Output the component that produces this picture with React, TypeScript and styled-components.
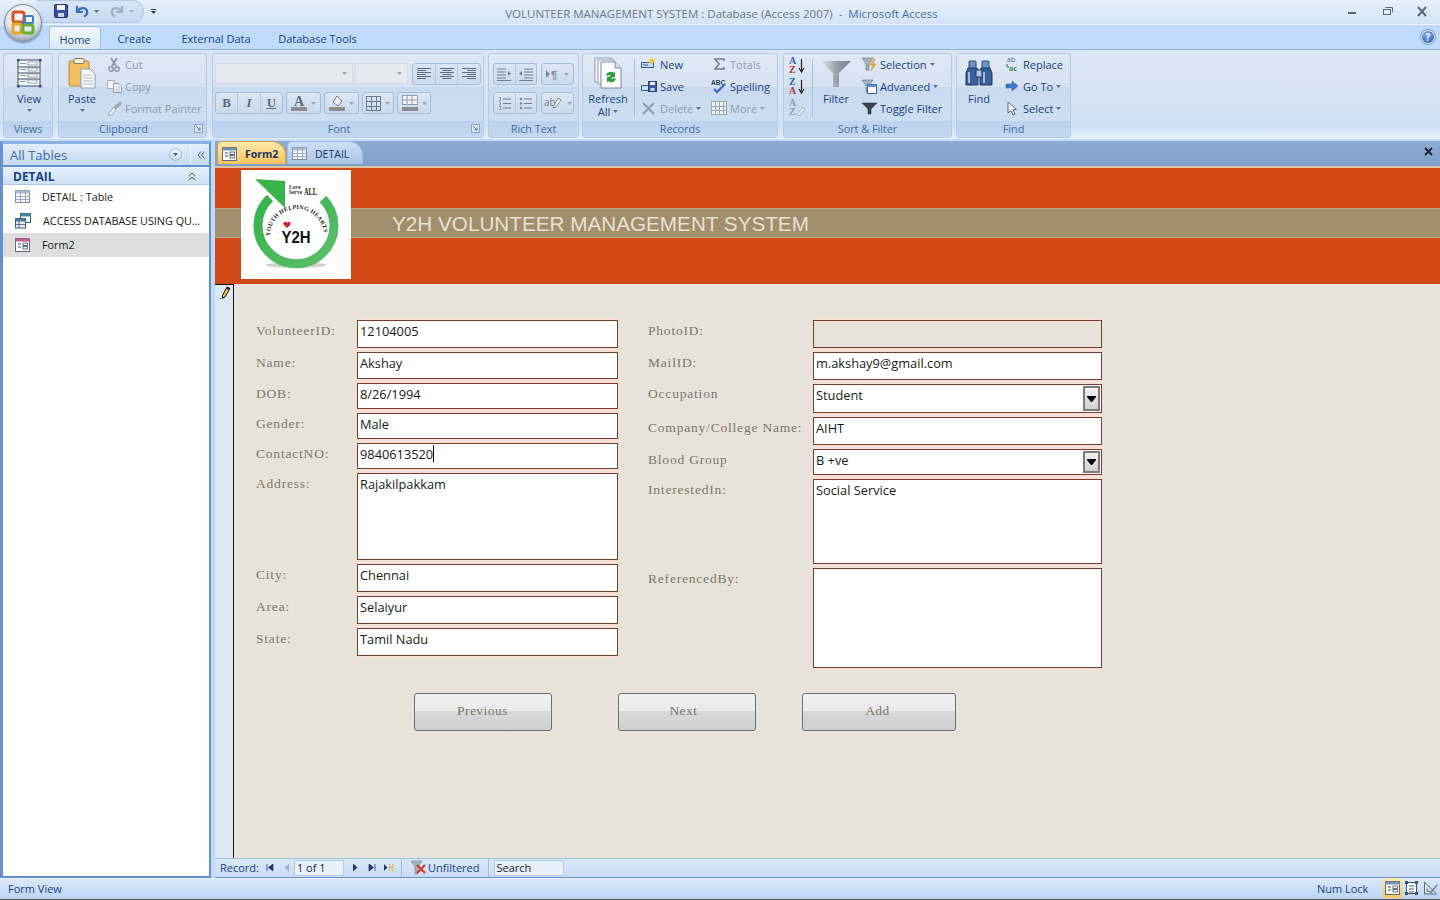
import { ReactNode } from "react";
import styled, { createGlobalStyle } from "styled-components";

const GlobalStyle = createGlobalStyle`
  html, body { margin: 0; padding: 0; height: 100%; overflow: hidden; }
  body { font-family: "Open Sans", "Noto Sans", sans-serif; font-size: 11px; color: #15428b; }
  * { box-sizing: border-box; }
`;

/* ---------- small drawings ---------- */

const Svg = ({ w, h = w, children }: { w: number; h?: number; children: ReactNode }) => (
  <svg width={w} height={h} viewBox={`0 0 ${w} ${h}`} style={{ display: "block", flex: "none", overflow: "visible" }}>
    {children}
  </svg>
);

const Caret = ({ color = "#5a6f8f" }: { color?: string }) => (
  <Svg w={5} h={3}>
    <path d="M0 0h5L2.5 3z" fill={color} />
  </Svg>
);

const ComboArrow = () => (
  <Svg w={9} h={6}>
    <path d="M0 0h9v1L5 6H4L0 1z" fill="#000" />
  </Svg>
);

const OfficeLogo = () => (
  <Svg w={26}>
    <rect x="3" y="2" width="11" height="10" rx="2" fill="none" stroke="#d8541f" strokeWidth="3" />
    <rect x="15" y="6" width="8" height="7" rx="1" fill="none" stroke="#3d7fc4" strokeWidth="2" />
    <rect x="3" y="14" width="8" height="9" rx="1" fill="none" stroke="#e5a823" strokeWidth="3" />
    <rect x="13" y="15" width="10" height="8" rx="2" fill="none" stroke="#6bae3a" strokeWidth="3" />
    <circle cx="13" cy="13" r="1.6" fill="#3d7fc4" />
  </Svg>
);

const SaveIcon = () => (
  <Svg w={14}>
    <rect x="0.5" y="0.5" width="13" height="13" rx="1" fill="#3b4f9c" stroke="#24306f" />
    <rect x="3" y="1" width="8" height="5" fill="#eef2fb" />
    <rect x="4" y="9" width="6" height="4" fill="#cfd6e8" />
  </Svg>
);

const UndoIcon = ({ color, flip }: { color: string; flip?: boolean }) => (
  <Svg w={14}>
    <path
      d="M2 2v6h6M2.5 7.5C5 3 11 3 12 7c.6 2.6-1 4.6-3 5.5"
      fill="none"
      stroke={color}
      strokeWidth="2.2"
      transform={flip ? "translate(14 0) scale(-1 1)" : undefined}
    />
  </Svg>
);

const ViewIcon = () => (
  <Svg w={26} h={30}>
    <rect x="2" y="2" width="22" height="26" fill="#f4f7fb" stroke="#3e4d63" />
    {[8, 14, 20].map((y) => (
      <path key={y} d={`M2 ${y + 1}h22`} stroke="#3e4d63" />
    ))}
    {[4, 10, 16, 22].map((y) => (
      <rect key={y} x="12" y={y} width="9" height="3" fill="#fff" stroke="#6d7c92" strokeWidth="0.7" />
    ))}
    {[4, 10, 16, 22].map((y) => (
      <path key={y} d={`M4 ${y + 1.5}h6`} stroke="#8895a8" />
    ))}
    {[[2, 2], [24, 2], [2, 28], [24, 28]].map(([x, y]) => (
      <rect key={`${x}-${y}`} x={x - 1} y={y - 1} width="2.5" height="2.5" fill="#2d4e85" />
    ))}
  </Svg>
);

const PasteIcon = () => (
  <Svg w={28} h={31}>
    <rect x="1" y="3" width="20" height="25" rx="1.5" fill="#f0c060" stroke="#b58a3c" />
    <rect x="6" y="0.5" width="10" height="5" rx="1" fill="#f4f0e4" stroke="#8a7a55" />
    <path d="M13 11h9l5 5v14H13z" fill="#fbfbfb" stroke="#8d9db3" />
    <path d="M15 17h9M15 20h10M15 23h10M15 26h10" stroke="#a9b5c6" />
  </Svg>
);

const CutIcon = () => (
  <Svg w={12} h={15}>
    <path d="M3 1l5 8M9 1L4 9" stroke="#8796aa" strokeWidth="1.6" />
    <circle cx="3" cy="12" r="2.2" fill="none" stroke="#8796aa" strokeWidth="1.4" />
    <circle cx="9" cy="12" r="2.2" fill="none" stroke="#8796aa" strokeWidth="1.4" />
  </Svg>
);

const CopyIcon = () => (
  <Svg w={15} h={13}>
    <path d="M.5.5h7v8h-7z" fill="#f1f4f8" stroke="#a3afc0" />
    <path d="M6.5 3.5h5l3 3v6h-8z" fill="#f8f9fb" stroke="#8f9cae" />
    <path d="M8 7h5M8 9h5M8 11h5" stroke="#b1bccb" />
  </Svg>
);

const BrushIcon = () => (
  <Svg w={15}>
    <path d="M13 1l1.500 1.500L9 8 7 6z" fill="#9aa8ba" stroke="#7f8ea3" strokeWidth="0.6" />
    <path d="M6.500 6L9 8.500 5 14H1l1-3 2-1z" fill="#e9edf3" stroke="#8f9cae" strokeWidth="0.8" />
  </Svg>
);

const AlignIcon = ({ mode }: { mode: "left" | "center" | "right" }) => {
  const rows = [14, 9, 14, 9, 14, 9];
  return (
    <Svg w={14} h={12}>
      {rows.map((w, i) => {
        const x = mode === "left" ? 0 : mode === "right" ? 14 - w : (14 - w) / 2;
        return <rect key={i} x={x} y={i * 2} width={w} height="1" fill="#5c6b80" />;
      })}
    </Svg>
  );
};

const SwatchIcon = ({ kind }: { kind: "font" | "fill" }) => (
  <Svg w={16}>
    {kind === "font" ? (
      <text x="8" y="11" textAnchor="middle" fontFamily="Liberation Serif, serif" fontWeight="700" fontSize="14" fill="#5c6b80">
        A
      </text>
    ) : (
      <path d="M8 1l5 5-4 5-5-4z" fill="#f3f5f8" stroke="#6d7c92" />
    )}
    <rect x="0" y="12" width="16" height="4" fill="#8d8d8d" />
  </Svg>
);

const GridIcon = ({ w = 15, h = 15, color = "#6a7a92", fill = "none", cols = 3, rows = 3 }: { w?: number; h?: number; color?: string; fill?: string; cols?: number; rows?: number }) => (
  <Svg w={w} h={h}>
    <rect x=".5" y=".5" width={w - 1} height={h - 1} fill={fill} stroke={color} />
    {Array.from({ length: cols - 1 }, (_, i) => (
      <path key={i} d={`M${Math.round(((i + 1) * w) / cols) + 0.5} 0v${h}`} stroke={color} />
    ))}
    {Array.from({ length: rows - 1 }, (_, i) => (
      <path key={i} d={`M0 ${Math.round(((i + 1) * h) / rows) + 0.5}h${w}`} stroke={color} />
    ))}
  </Svg>
);

const GridlinesIcon = () => (
  <Svg w={16}>
    <rect x=".5" y=".5" width="15" height="9" fill="#f3f5f8" stroke="#8d9bb0" />
    <path d="M0 5h16M5 0v10M10 0v10" stroke="#8d9bb0" />
    <rect x="0" y="12" width="16" height="4" fill="#8d8d8d" />
  </Svg>
);

const IndentIcon = ({ flip }: { flip?: boolean }) => (
  <Svg w={14} h={13}>
    <g transform={flip ? "translate(14 0) scale(-1 1)" : undefined}>
      <path d="M5 1h9M5 4h9M5 7h9M5 10h9M0 12.500h14" stroke="#6f7e94" />
      <path d="M3 3v5L0 5.500z" fill="#6f7e94" />
    </g>
  </Svg>
);

const ParaIcon = () => (
  <Svg w={14} h={11}>
    <path d="M0 1v8l4-4z" fill="#7a889c" />
    <text x="5" y="10" fontFamily="Liberation Sans, sans-serif" fontWeight="700" fontSize="11" fill="#7a889c">
      ¶
    </text>
  </Svg>
);

const ListIcon = ({ kind }: { kind: "num" | "dot" }) => (
  <Svg w={13} h={13}>
    {[2, 6.5, 11].map((y) =>
      kind === "num" ? (
        <path key={y} d={`M1 ${y - 1.5}h1.500v3H1`} fill="none" stroke="#7a889c" strokeWidth="0.8" />
      ) : (
        <circle key={y} cx="2" cy={y} r="1.3" fill="#7a889c" />
      ),
    )}
    {[2, 6.5, 11].map((y) => (
      <path key={y} d={`M5 ${y}h8`} stroke="#6f7e94" />
    ))}
  </Svg>
);

const HighlightIcon = () => (
  <Svg w={19} h={14}>
    <text x="0" y="10" fontSize="10" fontFamily="Open Sans, sans-serif" fill="#6f7e94">
      ab
    </text>
    <path d="M14 2l3 2-5 7-3 1 1-3z" fill="#eef1f6" stroke="#7a889c" />
  </Svg>
);

const RefreshIcon = () => (
  <Svg w={28} h={32}>
    <rect x="1" y="1" width="16" height="24" fill="#f5f7fa" stroke="#8e9bad" />
    <rect x="4" y="3" width="16" height="24" fill="#f8fafc" stroke="#8e9bad" />
    <path d="M7 5h14l6 6v20H7z" fill="#fff" stroke="#7b8aa0" />
    <path d="M21 5v6h6" fill="#dbe3ee" stroke="#7b8aa0" />
    <path d="M12 18a5 5 0 018-2l1-2v6h-6l2-2a3 3 0 00-3 1zM22 22a5 5 0 01-8 2l-1 2v-6h6l-2 2a3 3 0 003-1z" fill="#2f9c3f" />
  </Svg>
);

const NewRecIcon = () => (
  <Svg w={15} h={14}>
    <rect x=".5" y="5.5" width="12" height="5" fill="#c5dbf6" stroke="#33609f" />
    <path d="M2 8h5" stroke="#33609f" />
    <path d="M11 0l1 2.500L14.500 2 13 4l1.500 2-2.500-.5L11 8l-1-2.500L7.500 6 9 4 7.500 2l2.500.5z" fill="#f4c93c" />
  </Svg>
);

const SaveRecIcon = () => (
  <Svg w={16} h={13}>
    <rect x=".5" y="5.5" width="8" height="5" fill="#c5dbf6" stroke="#33609f" />
    <rect x="7.5" y="1.5" width="8" height="10" fill="#3d5aa6" stroke="#28407f" />
    <rect x="9" y="2" width="5" height="3" fill="#eef2fb" />
    <rect x="9.5" y="8" width="4" height="3" fill="#cfd6e8" />
  </Svg>
);

const DeleteIcon = () => (
  <Svg w={13}>
    <path d="M1 1l11 11M12 1L1 12" stroke="#8e9aab" strokeWidth="1.8" />
  </Svg>
);

const SigmaIcon = () => (
  <Svg w={11} h={12}>
    <path d="M10 3V1H1l4 5-4 5h9V9" fill="none" stroke="#6f7e94" strokeWidth="1.5" />
  </Svg>
);

const SpellIcon = () => (
  <Svg w={16} h={15}>
    <text x="0" y="6" fontSize="6.5" fontWeight="700" fontFamily="Liberation Sans, sans-serif" fill="#2a3c5a">
      ABC
    </text>
    <path d="M3 10l3 3 8-8" fill="none" stroke="#3b6fc6" strokeWidth="2.4" />
  </Svg>
);

const SortIcon = ({ top, bottom, dim, arrow = true }: { top: string; bottom: string; dim?: boolean; arrow?: boolean }) => (
  <Svg w={16} h={18}>
    <text x="0" y="8" fontSize="10" fontWeight="700" fontFamily="Liberation Serif, serif" fill={dim ? "#8d9bb0" : "#2d5fae"}>
      {top}
    </text>
    <text x="0" y="17" fontSize="10" fontWeight="700" fontFamily="Liberation Serif, serif" fill={dim ? "#8d9bb0" : "#b3362a"}>
      {bottom}
    </text>
    {arrow ? (
      <path d="M12.500 3v12M10 12l2.500 4 2.500-4" fill="none" stroke="#222" strokeWidth="1.2" />
    ) : (
      <path d="M8 16l6-7 2 2-6 7z" fill="#e8edf4" stroke="#8d9bb0" strokeWidth="0.7" />
    )}
  </Svg>
);

const FunnelIcon = () => (
  <Svg w={30} h={27}>
    <defs>
      <linearGradient id="funnel" x1="0" x2="1" y1="0" y2="0">
        <stop offset="0" stopColor="#e2e6ea" />
        <stop offset="0.5" stopColor="#9aa3ad" />
        <stop offset="1" stopColor="#737d88" />
      </linearGradient>
    </defs>
    <path d="M0 1h30L18 13v14h-6V13z" fill="url(#funnel)" />
  </Svg>
);

const SmallFunnel = ({ bolt, sheet }: { bolt?: boolean; sheet?: boolean }) => (
  <Svg w={15} h={15}>
    {bolt || sheet ? (
      <path d="M0 1h11L7 7v6H4V7z" fill="#aab4c0" stroke="#4c5664" strokeWidth="0.5" />
    ) : (
      <path d="M0 2h15L9 8v5H6V8z" fill="#39424e" stroke="#2a323c" strokeWidth="0.5" />
    )}
    {bolt && <path d="M12 2L8 8h3l-2 6 5-7h-3l2-5z" fill="#f0b92b" stroke="#b88716" strokeWidth="0.5" />}
    {sheet && (
      <>
        <rect x="5.5" y="5.5" width="9" height="9" fill="#fff" stroke="#33609f" />
        <rect x="5.5" y="5.5" width="9" height="2.5" fill="#5c8fd0" />
      </>
    )}
  </Svg>
);

const BinocularIcon = () => (
  <Svg w={28} h={27}>
    <rect x="4" y="1" width="7" height="8" rx="1" fill="#6f93c4" stroke="#2e4a78" />
    <rect x="17" y="1" width="7" height="8" rx="1" fill="#6f93c4" stroke="#2e4a78" />
    <path d="M3 8h9l1 5v12H1V13z" fill="#3a5f99" stroke="#203a63" />
    <path d="M16 8h9l2 5v12H15V13z" fill="#3a5f99" stroke="#203a63" />
    <rect x="11" y="10" width="6" height="7" fill="#b7c6da" stroke="#203a63" />
    <path d="M4 12v11M19 12v11" stroke="#9ebce0" strokeWidth="2" />
  </Svg>
);

const ReplaceIcon = () => (
  <Svg w={15} h={15}>
    <text x="3" y="5" fontSize="7" fontFamily="Open Sans, sans-serif" fill="#4f5f78">
      ab
    </text>
    <text x="5" y="14" fontSize="7" fontWeight="700" fontFamily="Open Sans, sans-serif" fill="#37883c">
      ac
    </text>
    <path d="M3 7v3h2" fill="none" stroke="#3868ad" />
  </Svg>
);

const GoToIcon = () => (
  <Svg w={12} h={10}>
    <path d="M0 3h6V0l6 5-6 5V7H0z" fill="#3c78d0" stroke="#26589f" strokeWidth="0.5" />
  </Svg>
);

const CursorIcon = () => (
  <Svg w={10} h={15}>
    <path d="M1 1v11l3-2.500 2 4.500 2-1-2-4.500h3.500z" fill="#fff" stroke="#556478" />
  </Svg>
);

const FormIcon = ({ pink }: { pink?: boolean }) => (
  <Svg w={15} h={14}>
    <rect x=".5" y=".5" width="14" height="13" fill="#fff" stroke="#5a6a82" />
    <rect x=".5" y=".5" width="14" height="3" fill={pink ? "#c75d8e" : "#7a90b0"} />
    <path d="M3 6h3M3 9h3" stroke="#3e4d63" />
    <rect x="8" y="5" width="4.5" height="2.5" fill="none" stroke="#3e4d63" strokeWidth="0.8" />
    <rect x="8" y="8.5" width="4.5" height="2.5" fill="none" stroke="#3e4d63" strokeWidth="0.8" />
  </Svg>
);

const LayoutViewIcon = () => (
  <Svg w={13} h={14}>
    <rect x="1.5" y="1.5" width="10" height="11" fill="#fff" stroke="#44536a" />
    <path d="M4 5h5M4 8h5M4 11h5" stroke="#44536a" />
    <path d="M0 0h3v3H0zM10 0h3v3h-3zM0 11h3v3H0zM10 11h3v3h-3z" fill="#44536a" />
  </Svg>
);

const DesignViewIcon = () => (
  <Svg w={14} h={14}>
    <path d="M.5 1v12h12z" fill="#dfe6ef" stroke="#5d6b80" />
    <path d="M3 7.500v3h3z" fill="#bfdbff" stroke="#5d6b80" strokeWidth="0.7" />
    <path d="M5 12L13 3l1 1-7 9z" fill="#7d8a9c" />
  </Svg>
);

const TableIcon = () => (
  <Svg w={15} h={13}>
    <rect x=".5" y=".5" width="14" height="12" fill="#f3f6fb" stroke="#7b8ba3" />
    <rect x=".5" y=".5" width="14" height="3" fill="#aebdd2" />
    <path d="M0 6.500h15M0 9.500h15M5.500 0v13M10.500 0v13" stroke="#8c9bb2" strokeWidth="0.8" />
  </Svg>
);

const QueryIcon = () => (
  <Svg w={16}>
    <rect x="5.5" y=".5" width="10" height="9" fill="#fff" stroke="#2c6a78" />
    <rect x="5.5" y=".5" width="10" height="3" fill="#3d8b9c" />
    <rect x=".5" y="5.5" width="10" height="9.5" fill="#e9eff7" stroke="#41587a" />
    <rect x=".5" y="5.5" width="10" height="3" fill="#5677a5" />
    <path d="M0 11.500h11M4 8v7" stroke="#41587a" strokeWidth="0.8" />
  </Svg>
);

const PencilIcon = () => (
  <Svg w={11} h={14}>
    <path d="M7 1l3 1.500L5 11l-2.500 1L2.500 9.500z" fill="#f2c23a" stroke="#111" />
    <path d="M7 1l3 1.500-.8 1.500-3-1.500z" fill="#111" />
    <path d="M0 12.500h.8M1.800 12.500h.8" stroke="#111" />
  </Svg>
);

const FilterOffIcon = () => (
  <Svg w={15} h={15}>
    <path d="M0 1h11L7 7v7H4V7z" fill="#a9b2bd" stroke="#6b7584" strokeWidth="0.5" />
    <path d="M6 5l8 8M14 5l-8 8" stroke="#d03a26" strokeWidth="2.2" />
  </Svg>
);

const NavIcon = ({ kind }: { kind: "first" | "prev" | "next" | "last" | "new" }) => (
  <Svg w={10} h={9}>
    {kind === "first" && <path d="M2 1v7M8 1v7L3.500 4.500z" fill="#1e3d6b" stroke="#1e3d6b" strokeWidth="0.8" />}
    {kind === "prev" && <path d="M7 .5v8L2.500 4.500z" fill="#9eb0c8" />}
    {kind === "next" && <path d="M3 .5v8l4.500-4z" fill="#1e3d6b" />}
    {kind === "last" && <path d="M8 1v7M2 1v7l4.500-3.500z" fill="#1e3d6b" stroke="#1e3d6b" strokeWidth="0.8" />}
    {kind === "new" && (
      <>
        <path d="M0 1v7l3.500-3.500z" fill="#1e3d6b" />
        <path d="M5 1h1.500v1.500H5zM8 1h1.500v1.500H8zM5 3.800h4.500v1.500H5zM5 6.500h1.500V8H5zM8 6.500h1.500V8H8z" fill="#e0ac27" />
      </>
    )}
  </Svg>
);

const LauncherIcon = () => (
  <Svg w={9} h={9}>
    <rect x=".5" y=".5" width="8" height="8" fill="#dce7f5" stroke="#8ea6c6" />
    <path d="M2 2l4 4M6 3.500V6H3.500" fill="none" stroke="#5d7698" />
  </Svg>
);

const Logo = () => (
  <svg width="110" height="109" viewBox="0 0 110 109" style={{ display: "block" }}>
    <defs>
      <linearGradient id="ring" x1="0" x2="1" y1="0" y2="1">
        <stop offset="0" stopColor="#35b24a" />
        <stop offset="1" stopColor="#5cbf6c" />
      </linearGradient>
      <path id="arc" d="M29 66A27 27 0 1 1 83 66" />
    </defs>
    <ellipse cx="55" cy="95" rx="30" ry="3" fill="#cfd4cf" />
    <path d="M82 29A38 38 0 1 1 29 28" fill="none" stroke="url(#ring)" strokeWidth="9" />
    <path d="M14 9l30 2v27z" fill="#38b54a" />
    <text x="48" y="19" fontFamily="Liberation Serif, serif" fontSize="5.5" fontWeight="700" fill="#333">Love</text>
    <text x="48" y="24" fontFamily="Liberation Serif, serif" fontSize="5.5" fontWeight="700" fill="#333">Serve</text>
    <text x="63" y="25" fontFamily="Liberation Serif, serif" fontSize="10" fontWeight="700" fill="#222" textLength="13" lengthAdjust="spacingAndGlyphs">ALL</text>
    <text fontFamily="Liberation Serif, serif" fontSize="6" fontWeight="700" fill="#222" letterSpacing="0.2">
      <textPath href="#arc">YOUTH HELPING HEARTS</textPath>
    </text>
    <text x="55" y="73" textAnchor="middle" fontFamily="Liberation Sans, sans-serif" fontSize="17" fontWeight="700" fill="#111" textLength="29" lengthAdjust="spacingAndGlyphs">Y2H</text>
    <path d="M43 55c-2-2.500 1.500-4.500 3-2 1.500-2.500 5-.5 3 2l-3 3z" fill="#d3202a" />
  </svg>
);

/* ---------- title bar ---------- */

const Window = styled.div`
  position: relative;
  width: 1440px;
  height: 900px;
  display: flex;
  flex-direction: column;
  overflow: hidden;
  background: #bfdbff;
`;

const TitleBar = styled.div`
  flex: none;
  height: 25px;
  display: flex;
  align-items: center;
  padding: 0 0 2px 36px;
  background: linear-gradient(#e6f0fc, #d3e3f7);
  border-bottom: 1px solid #eef5fd;
`;

const OfficeButton = styled.div`
  position: absolute;
  left: 4px;
  top: 4px;
  width: 38px;
  height: 38px;
  border-radius: 50%;
  display: flex;
  align-items: center;
  justify-content: center;
  background: radial-gradient(circle at 50% 30%, #ffffff, #dfe5ec 55%, #8f9caa 85%, #c8d0da);
  border: 1px solid #7d8a9a;
  box-shadow: 0 1px 2px rgba(40, 60, 90, 0.5);
  z-index: 2;
`;

const QuickBar = styled.div`
  width: 108px;
  height: 23px;
  padding-left: 18px;
  display: flex;
  align-items: center;
  border-radius: 0 12px 12px 0;
  background: linear-gradient(#d8e6f7, #c5d9f1);
  border: 1px solid #b4c9e3;
  border-left: 0;
`;

const QuickSlot = styled.span<{ $ml: number }>`
  margin-left: ${(p) => p.$ml}px;
  display: flex;
`;

const QuickMore = styled.div`
  margin-left: 7px;
  width: 5px;
  display: flex;
  flex-direction: column;
  gap: 1px;
  position: relative;
  z-index: 1;
  &::before {
    content: "";
    height: 1px;
    background: #1e3d6b;
  }
`;

const Title = styled.div`
  position: absolute;
  left: 0;
  top: 6px;
  width: 100%;
  padding-left: 3px;
  text-align: center;
  font-size: 11.5px;
  line-height: 16px;
  color: #6c7886;
`;

const TitleAccent = styled.span`
  color: #4a6f9e;
`;

const WindowButtons = styled.div`
  margin-left: auto;
  display: flex;
  align-items: center;
  gap: 24px;
  padding-right: 13px;
`;

/* ---------- ribbon ---------- */

const TabRow = styled.div`
  flex: none;
  height: 24px;
  display: flex;
  align-items: flex-end;
  padding-left: 49px;
  background: #bfdbff;
`;

const RibbonTab = styled.div<{ $active?: boolean; $w: number }>`
  width: ${(p) => p.$w}px;
  height: 23px;
  padding-top: 2px;
  display: flex;
  align-items: center;
  justify-content: center;
  font-size: 11px;
  color: #15428b;
  border-radius: 3px 3px 0 0;
  ${(p) =>
    p.$active &&
    `
    background: linear-gradient(#f3f8fe, #dbe7f6);
    border: 1px solid #a3bfe0;
    border-bottom: 0;
  `}
`;

const HelpButton = styled.div`
  position: absolute;
  right: 5px;
  top: 30px;
  width: 14px;
  height: 14px;
  border-radius: 50%;
  background: radial-gradient(circle at 40% 30%, #7fb0ee, #1c4fae);
  border: 1px solid #fff;
  outline: 1px solid #6e93c7;
  color: #fff;
  font-size: 10px;
  font-weight: 700;
  line-height: 12px;
  text-align: center;
`;

const Ribbon = styled.div`
  flex: none;
  height: 91px;
  padding: 3px 0 0 3px;
  display: flex;
  background: linear-gradient(#dbe6f4 0, #d6e3f3 60%, #cde0f5 85%, #e5f0fb 100%);
  border-top: 1px solid #8eb0d9;
  border-bottom: 1px solid #c9dcf2;
`;

const Group = styled.div<{ $w: number; $ml?: number }>`
  width: ${(p) => p.$w}px;
  height: 85px;
  margin-left: ${(p) => p.$ml ?? 0}px;
  display: flex;
  flex-direction: column;
  border: 1px solid #b3cbe6;
  border-radius: 3px;
  background: linear-gradient(#dfe8f5 0, #d6e2f2 40%, #c9daef 40%, #cfdff3 100%);
`;

const GroupBody = styled.div`
  flex: 1;
  min-height: 0;
  display: flex;
  position: relative;
`;

const GroupLabel = styled.div<{ $launcher?: boolean }>`
  position: relative;
  flex: none;
  height: 16px;
  padding-right: ${(p) => (p.$launcher ? 18 : 0)}px;
  line-height: 15px;
  text-align: center;
  font-size: 10.8px;
  color: #3e6aaa;
  background: linear-gradient(#bcd2ee, #c3d8f1);
  border-radius: 0 0 2px 2px;
`;

const Launcher = styled.span`
  position: absolute;
  right: 3px;
  top: 3px;
`;

const BigButton = styled.div<{ $w: number; $ml?: number }>`
  width: ${(p) => p.$w}px;
  margin-left: ${(p) => p.$ml ?? 0}px;
  padding-top: 3px;
  display: flex;
  flex-direction: column;
  align-items: center;
  flex: none;
  color: #15428b;
  font-size: 11px;
  line-height: 13px;
`;

const BigIconSlot = styled.div`
  height: 32px;
  display: flex;
  align-items: center;
  justify-content: center;
  margin-bottom: 3px;
`;

const CaretLine = styled.div<{ $h?: number }>`
  height: ${(p) => p.$h ?? 10}px;
  display: flex;
  align-items: center;
  justify-content: center;
  gap: 3px;
`;

const SmallColumn = styled.div<{ $w?: number; $ml?: number }>`
  width: ${(p) => (p.$w ? `${p.$w}px` : "auto")};
  margin: -1px 0 0 ${(p) => p.$ml ?? 0}px;
  display: flex;
  flex-direction: column;
  flex: none;
`;

const SmallButton = styled.div<{ $dim?: boolean }>`
  height: 22px;
  display: flex;
  align-items: center;
  gap: 3px;
  font-size: 11px;
  white-space: nowrap;
  color: ${(p) => (p.$dim ? "#8d9bae" : "#15428b")};
`;

const IconBox = styled.span<{ $w: number }>`
  width: ${(p) => p.$w}px;
  display: flex;
  justify-content: center;
  flex: none;
`;

const Separator = styled.div<{ $ml: number }>`
  width: 1px;
  height: 58px;
  margin: 5px 0 0 ${(p) => p.$ml}px;
  background: #a9c0dc;
  flex: none;
`;

const FontBody = styled.div<{ $pl?: number }>`
  flex: 1;
  padding: 9px 0 0 ${(p) => p.$pl ?? 2}px;
  display: flex;
  flex-direction: column;
  gap: 7px;
`;

const ToolRow = styled.div<{ $gap?: number }>`
  display: flex;
  gap: ${(p) => p.$gap ?? 3}px;
`;

const Combo = styled.div<{ $w: number }>`
  width: ${(p) => p.$w}px;
  height: 21px;
  display: flex;
  align-items: center;
  justify-content: flex-end;
  padding-right: 5px;
  background: #e6e9ed;
  border: 1px solid #d3dbe5;
`;

const ToolGroup = styled.div<{ $w: number; $ml?: number }>`
  width: ${(p) => p.$w}px;
  height: 22px;
  margin-left: ${(p) => p.$ml ?? 0}px;
  display: flex;
  align-items: center;
  border: 1px solid #a6bcd9;
  border-radius: 3px;
  background: linear-gradient(#dbe6f4, #cad9ed);
`;

const ToolCell = styled.div<{ $divided?: boolean }>`
  flex: 1;
  height: 100%;
  display: flex;
  align-items: center;
  justify-content: center;
  gap: 4px;
  border-left: ${(p) => (p.$divided ? "1px solid #b6c8e0" : "0")};
`;

const FormatLetter = styled.span<{ $italic?: boolean; $underline?: boolean }>`
  font-family: "Liberation Serif", serif;
  font-weight: 700;
  font-size: 13px;
  color: #5c6b80;
  font-style: ${(p) => (p.$italic ? "italic" : "normal")};
  text-decoration: ${(p) => (p.$underline ? "underline" : "none")};
`;

const SortColumn = styled.div`
  margin-left: 5px;
  padding-top: 2px;
  display: flex;
  flex-direction: column;
  gap: 3px;
  flex: none;
`;

/* ---------- workspace ---------- */

const Workspace = styled.div`
  flex: 1;
  min-height: 0;
  display: flex;
  padding-top: 1px;
  background: #bfdbff;
`;

const NavPane = styled.div`
  width: 211px;
  flex: none;
  display: flex;
  flex-direction: column;
  border-style: solid;
  border-width: 3px 2px 2px 3px;
  border-color: #8cb0dd #6591cd #6591cd #6591cd;
  background: #fff;
`;

const NavHeader = styled.div`
  flex: none;
  height: 23px;
  display: flex;
  align-items: center;
  padding: 0 4px 0 7px;
  font-size: 13px;
  color: #3e6aaa;
  background: linear-gradient(#e2eefc, #c6daf3);
  border-bottom: 2px solid #6591cd;
`;

const NavHeaderTitle = styled.span`
  flex: 1;
`;

const RoundCaret = styled.span`
  width: 13px;
  height: 13px;
  border-radius: 50%;
  border: 1px solid #9eb6d5;
  background: linear-gradient(#f4f8fd, #c8d7ea);
  display: flex;
  align-items: center;
  justify-content: center;
`;

const NavDivider = styled.span`
  width: 1px;
  height: 18px;
  margin: 0 6px 0 8px;
  background: #eef5fd;
`;

const NavGroupHeader = styled.div`
  flex: none;
  height: 18px;
  padding: 1px 13px 0 10px;
  display: flex;
  align-items: center;
  justify-content: space-between;
  font-size: 12px;
  font-weight: 700;
  color: #15428b;
  background: linear-gradient(#e4f0fd, #cfe1f7);
  border-bottom: 1px solid #aec8e8;
`;

const NavRow = styled.div<{ $selected?: boolean }>`
  flex: none;
  height: 24px;
  padding: 0 0 1px 12px;
  display: flex;
  align-items: center;
  gap: 12px;
  font-size: 10.8px;
  color: #1a1a1a;
  white-space: nowrap;
  background: ${(p) => (p.$selected ? "#dedede" : "transparent")};
`;

const Splitter = styled.div`
  width: 4px;
  flex: none;
  background: #bfdbff;
`;

const Document = styled.div`
  flex: 1;
  min-width: 0;
  display: flex;
  flex-direction: column;
`;

const DocTabs = styled.div`
  flex: none;
  height: 27px;
  display: flex;
  align-items: flex-end;
  padding: 0 6px 2px 2px;
  background: linear-gradient(#8eaad2, #7f9fcb);
  border-bottom: 2px solid #d9c3a0;
`;

const DocTab = styled.div<{ $active?: boolean; $w: number }>`
  width: ${(p) => p.$w}px;
  height: 23px;
  margin-right: 1px;
  padding: 1px 0 0 4px;
  display: flex;
  align-items: center;
  gap: 8px;
  font-size: 10.5px;
  color: #15366b;
  font-weight: ${(p) => (p.$active ? 700 : 400)};
  border-radius: 5px 14px 0 0;
  border: 1px solid ${(p) => (p.$active ? "#d09c50" : "#9fbbdd")};
  border-bottom: 0;
  background: ${(p) => (p.$active ? "linear-gradient(#fdeaa8, #fcc25c)" : "linear-gradient(#cfe0f6, #a9c4e6)")};
`;

const DocClose = styled.div`
  margin: 0 0 4px auto;
  width: 12px;
  height: 18px;
  display: flex;
  align-items: center;
  justify-content: center;
  color: #101f3a;
`;

const FormHeader = styled.div`
  position: relative;
  flex: none;
  height: 116px;
  display: flex;
  flex-direction: column;
  background: #d34817;
`;

const HeaderBand = styled.div`
  margin-top: 40px;
  height: 30px;
  padding-left: 177px;
  background: #a28e6a;
  border-top: 1px solid #b9a88a;
  border-bottom: 1px solid #b9a88a;
  font-family: "Liberation Sans", Arial, sans-serif;
  font-size: 20.7px;
  line-height: 30px;
  color: #e7e2d8;
  white-space: nowrap;
`;

const LogoFrame = styled.div`
  position: absolute;
  left: 26px;
  top: 2px;
  width: 110px;
  height: 109px;
  background: #fff;
`;

const FormArea = styled.div`
  flex: 1;
  min-height: 0;
  display: flex;
`;

const RecordSelector = styled.div`
  width: 19px;
  flex: none;
  background: #dde8f6;
  border-right: 1px solid #111;
`;

const PencilBox = styled.div`
  height: 17px;
  padding: 1px 0 0 5px;
  border-top: 1px solid #111;
`;

const FormDetail = styled.div`
  flex: 1;
  min-width: 0;
  padding: 36px 0 0 22px;
  background: #e8e3da;
`;

const FieldColumns = styled.div`
  display: flex;
  gap: 30px;
  align-items: flex-start;
`;

const FieldColumn = styled.div`
  display: flex;
  flex-direction: column;
  gap: 4px;
`;

const FieldRow = styled.div<{ $h: number }>`
  display: flex;
  height: ${(p) => p.$h}px;
`;

const FieldLabel = styled.div<{ $w: number; $top?: number }>`
  width: ${(p) => p.$w}px;
  flex: none;
  padding-top: ${(p) => p.$top ?? 2}px;
  font-family: "Liberation Serif", "Times New Roman", serif;
  font-size: 13.5px;
  line-height: 17px;
  letter-spacing: 0.8px;
  color: #7b766d;
  white-space: nowrap;
`;

const FieldBox = styled.div<{ $w: number; $blank?: boolean }>`
  position: relative;
  width: ${(p) => p.$w}px;
  flex: none;
  padding: 1px 2px;
  background: ${(p) => (p.$blank ? "#e8e3da" : "#fff")};
  border: 1px solid #7d3b2e;
  box-shadow: 0 -2px 0 #f5dfd7, 0 2px 0 #f5dfd7;
  font-size: 12.8px;
  line-height: 18px;
  color: #1a1a1a;
`;

const TextCaret = styled.span`
  display: inline-block;
  width: 1px;
  height: 17px;
  vertical-align: top;
  background: #000;
`;

const ComboButton = styled.div`
  position: absolute;
  right: 1px;
  top: 1px;
  bottom: 1px;
  width: 17px;
  display: flex;
  align-items: center;
  justify-content: center;
  background: linear-gradient(#f2f2f2, #d0d0d0);
  border: 2px solid #7c7c7c;
`;

const ButtonRow = styled.div`
  display: flex;
  margin: 25px 0 0 158px;
`;

const FormButton = styled.div<{ $w: number; $ml?: number; $pr?: number }>`
  width: ${(p) => p.$w}px;
  height: 38px;
  margin-left: ${(p) => p.$ml ?? 0}px;
  padding: 0 ${(p) => p.$pr ?? 3}px 2px 0;
  display: flex;
  align-items: center;
  justify-content: center;
  font-family: "Liberation Serif", serif;
  font-size: 13.5px;
  letter-spacing: 0.5px;
  color: #7b766d;
  border: 1px solid #6e6e6e;
  border-radius: 3px;
  background: linear-gradient(#f1f1f1 0, #e9e9e9 48%, #d9d9d9 48%, #cfcfcf 100%);
`;

const RecordBar = styled.div`
  flex: none;
  height: 20px;
  padding: 0 0 1px 5px;
  display: flex;
  align-items: center;
  font-size: 11px;
  color: #15428b;
  background: linear-gradient(#dbe8f8, #c9dcf4);
  border-top: 1px solid #a9c3e4;
  border-bottom: 1px solid #6591cd;
  white-space: nowrap;
`;

const RecordField = styled.div<{ $w: number; $ml: number }>`
  width: ${(p) => p.$w}px;
  height: 16px;
  margin-left: ${(p) => p.$ml}px;
  padding-left: 2px;
  line-height: 14px;
  color: #15274d;
  background: #e7f0fc;
  border: 1px solid #b5cbe6;
`;

const BarDivider = styled.div<{ $ml: number }>`
  width: 1px;
  height: 18px;
  margin-left: ${(p) => p.$ml}px;
  background: #a3bddd;
`;

const BarNav = styled.span<{ $ml: number }>`
  margin-left: ${(p) => p.$ml}px;
  display: flex;
`;

const BarText = styled.span<{ $ml: number }>`
  margin-left: ${(p) => p.$ml}px;
`;

const StatusBar = styled.div`
  flex: none;
  height: 22px;
  display: flex;
  align-items: center;
  padding: 0 0 2px 8px;
  font-size: 11px;
  color: #15428b;
  white-space: nowrap;
  background: linear-gradient(#dbe9fa, #bcd4f2);
  border-top: 1px solid #e5effb;
  border-bottom: 1px solid #555;
`;

const StatusDivider = styled.div<{ $ml: number }>`
  width: 1px;
  height: 20px;
  margin-left: ${(p) => p.$ml}px;
  background: #a3bddd;
`;

const ViewButtons = styled.div`
  margin-left: 6px;
  display: flex;
`;

const ViewButton = styled.div<{ $active?: boolean }>`
  width: 19px;
  height: 20px;
  display: flex;
  align-items: center;
  justify-content: center;
  background: ${(p) => (p.$active ? "linear-gradient(#fde9a8, #fbc35d)" : "transparent")};
  border-radius: 2px;
`;

/* ---------- data ---------- */

type Field = { label: string; value?: string; h: number; combo?: boolean; caret?: boolean; blank?: boolean; labelTop?: number };

const leftFields: Field[] = [
  { label: "VolunteerID:", value: "12104005", h: 28 },
  { label: "Name:", value: "Akshay", h: 27 },
  { label: "DOB:", value: "8/26/1994", h: 26 },
  { label: "Gender:", value: "Male", h: 26 },
  { label: "ContactNO:", value: "9840613520", h: 26, caret: true },
  { label: "Address:", value: "Rajakilpakkam", h: 87 },
  { label: "City:", value: "Chennai", h: 28 },
  { label: "Area:", value: "Selaiyur", h: 28 },
  { label: "State:", value: "Tamil Nadu", h: 28 },
];

const rightFields: Field[] = [
  { label: "PhotoID:", h: 28, blank: true },
  { label: "MailID:", value: "m.akshay9@gmail.com", h: 28 },
  { label: "Occupation", value: "Student", h: 29, combo: true, labelTop: 1 },
  { label: "Company/College Name:", value: "AIHT", h: 28 },
  { label: "Blood Group", value: "B +ve", h: 26, combo: true },
  { label: "InterestedIn:", value: "Social Service", h: 85 },
  { label: "ReferencedBy:", h: 100 },
];

const renderFields = (fields: Field[], labelWidth: number, boxWidth: number) =>
  fields.map((f) => (
    <FieldRow key={f.label} $h={f.h}>
      <FieldLabel $w={labelWidth} $top={f.labelTop}>{f.label}</FieldLabel>
      <FieldBox $w={boxWidth} $blank={f.blank}>
        {f.value}
        {f.caret && <TextCaret />}
        {f.combo && (
          <ComboButton>
            <ComboArrow />
          </ComboButton>
        )}
      </FieldBox>
    </FieldRow>
  ));

const App = () => {
  return (
    <Window>
      <GlobalStyle />
      <OfficeButton>
        <OfficeLogo />
      </OfficeButton>
      <TitleBar>
        <QuickBar>
          <SaveIcon />
          <QuickSlot $ml={7}><UndoIcon color="#3a6fb8" /></QuickSlot>
          <QuickSlot $ml={5}><Caret /></QuickSlot>
          <QuickSlot $ml={11}><UndoIcon color="#9fb0c6" flip /></QuickSlot>
          <QuickSlot $ml={5}><Caret color="#9fb0c6" /></QuickSlot>
        </QuickBar>
        <QuickMore>
          <Caret color="#1e3d6b" />
        </QuickMore>
        <Title>
          VOLUNTEER MANAGEMENT SYSTEM : Database (Access 2007) &nbsp;-&nbsp; <TitleAccent>Microsoft Access</TitleAccent>
        </Title>
        <WindowButtons>
          <Svg w={11} h={8}>
            <rect x="0" y="5" width="8" height="2" fill="#5b6878" />
          </Svg>
          <Svg w={10} h={8}>
            <rect x=".5" y="2.5" width="7" height="5" fill="none" stroke="#5b6878" />
            <path d="M2.500.5h7v5" fill="none" stroke="#5b6878" />
          </Svg>
          <Svg w={10} h={9}>
            <path d="M1 0l8 9M9 0L1 9" stroke="#5b6878" strokeWidth="2" />
          </Svg>
        </WindowButtons>
      </TitleBar>

      <TabRow>
        <RibbonTab $active $w={52}>Home</RibbonTab>
        <RibbonTab $w={67}>Create</RibbonTab>
        <RibbonTab $w={96}>External Data</RibbonTab>
        <RibbonTab $w={107}>Database Tools</RibbonTab>
      </TabRow>
      <HelpButton>?</HelpButton>

      <Ribbon>
        <Group $w={50}>
          <GroupBody>
            <BigButton $w={50}>
              <BigIconSlot><ViewIcon /></BigIconSlot>
              View
              <CaretLine><Caret /></CaretLine>
            </BigButton>
          </GroupBody>
          <GroupLabel>Views</GroupLabel>
        </Group>

        <Group $w={149} $ml={5}>
          <GroupBody>
            <BigButton $w={44} $ml={1}>
              <BigIconSlot><PasteIcon /></BigIconSlot>
              Paste
              <CaretLine><Caret /></CaretLine>
            </BigButton>
            <SmallColumn $ml={2}>
              <SmallButton $dim><IconBox $w={16}><CutIcon /></IconBox>Cut</SmallButton>
              <SmallButton $dim><IconBox $w={16}><CopyIcon /></IconBox>Copy</SmallButton>
              <SmallButton $dim><IconBox $w={16}><BrushIcon /></IconBox>Format Painter</SmallButton>
            </SmallColumn>
          </GroupBody>
          <GroupLabel $launcher>Clipboard<Launcher><LauncherIcon /></Launcher></GroupLabel>
        </Group>

        <Group $w={272} $ml={5}>
          <GroupBody>
            <FontBody>
              <ToolRow $gap={2}>
                <Combo $w={138}><Caret color="#9aa6b6" /></Combo>
                <Combo $w={53}><Caret color="#9aa6b6" /></Combo>
                <ToolGroup $w={69} $ml={2}>
                  <ToolCell><AlignIcon mode="left" /></ToolCell>
                  <ToolCell $divided><AlignIcon mode="center" /></ToolCell>
                  <ToolCell $divided><AlignIcon mode="right" /></ToolCell>
                </ToolGroup>
              </ToolRow>
              <ToolRow>
                <ToolGroup $w={68}>
                  <ToolCell><FormatLetter>B</FormatLetter></ToolCell>
                  <ToolCell $divided><FormatLetter $italic>I</FormatLetter></ToolCell>
                  <ToolCell $divided><FormatLetter $underline>U</FormatLetter></ToolCell>
                </ToolGroup>
                <ToolGroup $w={35}>
                  <ToolCell><SwatchIcon kind="font" /><Caret color="#9aa6b6" /></ToolCell>
                </ToolGroup>
                <ToolGroup $w={35}>
                  <ToolCell><SwatchIcon kind="fill" /><Caret color="#9aa6b6" /></ToolCell>
                </ToolGroup>
                <ToolGroup $w={32}>
                  <ToolCell><GridIcon /><Caret color="#9aa6b6" /></ToolCell>
                </ToolGroup>
                <ToolGroup $w={34}>
                  <ToolCell><GridlinesIcon /><Caret color="#9aa6b6" /></ToolCell>
                </ToolGroup>
              </ToolRow>
            </FontBody>
          </GroupBody>
          <GroupLabel $launcher>Font<Launcher><LauncherIcon /></Launcher></GroupLabel>
        </Group>

        <Group $w={91} $ml={4}>
          <GroupBody>
            <FontBody $pl={4}>
              <ToolRow $gap={4}>
                <ToolGroup $w={44}>
                  <ToolCell><IndentIcon flip /></ToolCell>
                  <ToolCell $divided><IndentIcon /></ToolCell>
                </ToolGroup>
                <ToolGroup $w={33}>
                  <ToolCell><ParaIcon /><Caret color="#9aa6b6" /></ToolCell>
                </ToolGroup>
              </ToolRow>
              <ToolRow $gap={4}>
                <ToolGroup $w={44}>
                  <ToolCell><ListIcon kind="num" /></ToolCell>
                  <ToolCell $divided><ListIcon kind="dot" /></ToolCell>
                </ToolGroup>
                <ToolGroup $w={33}>
                  <ToolCell><HighlightIcon /><Caret color="#9aa6b6" /></ToolCell>
                </ToolGroup>
              </ToolRow>
            </FontBody>
          </GroupBody>
          <GroupLabel>Rich Text</GroupLabel>
        </Group>

        <Group $w={196} $ml={3}>
          <GroupBody>
            <BigButton $w={50}>
              <BigIconSlot><RefreshIcon /></BigIconSlot>
              Refresh
              <CaretLine $h={13}>All <Caret /></CaretLine>
            </BigButton>
            <Separator $ml={1} />
            <SmallColumn $w={71} $ml={5}>
              <SmallButton><IconBox $w={17}><NewRecIcon /></IconBox>New</SmallButton>
              <SmallButton><IconBox $w={17}><SaveRecIcon /></IconBox>Save</SmallButton>
              <SmallButton $dim><IconBox $w={17}><DeleteIcon /></IconBox>Delete <Caret /></SmallButton>
            </SmallColumn>
            <SmallColumn>
              <SmallButton $dim><IconBox $w={16}><SigmaIcon /></IconBox>Totals</SmallButton>
              <SmallButton><IconBox $w={16}><SpellIcon /></IconBox>Spelling</SmallButton>
              <SmallButton $dim><IconBox $w={16}><GridIcon w={16} h={14} color="#98a6b9" fill="#eef2f7" cols={4} /></IconBox>More <Caret color="#9aa6b6" /></SmallButton>
            </SmallColumn>
          </GroupBody>
          <GroupLabel>Records</GroupLabel>
        </Group>

        <Group $w={169} $ml={5}>
          <GroupBody>
            <SortColumn>
              <SortIcon top="A" bottom="Z" />
              <SortIcon top="Z" bottom="A" />
              <SortIcon top="A" bottom="Z" dim arrow={false} />
            </SortColumn>
            <Separator $ml={7} />
            <BigButton $w={44} $ml={1}>
              <BigIconSlot><FunnelIcon /></BigIconSlot>
              Filter
            </BigButton>
            <SmallColumn $ml={3}>
              <SmallButton><IconBox $w={16}><SmallFunnel bolt /></IconBox>Selection <Caret /></SmallButton>
              <SmallButton><IconBox $w={16}><SmallFunnel sheet /></IconBox>Advanced <Caret /></SmallButton>
              <SmallButton><IconBox $w={16}><SmallFunnel /></IconBox>Toggle Filter</SmallButton>
            </SmallColumn>
          </GroupBody>
          <GroupLabel>Sort &amp; Filter</GroupLabel>
        </Group>

        <Group $w={115} $ml={4}>
          <GroupBody>
            <BigButton $w={44}>
              <BigIconSlot><BinocularIcon /></BigIconSlot>
              Find
            </BigButton>
            <SmallColumn $ml={2}>
              <SmallButton><IconBox $w={17}><ReplaceIcon /></IconBox>Replace</SmallButton>
              <SmallButton><IconBox $w={17}><GoToIcon /></IconBox>Go To <Caret /></SmallButton>
              <SmallButton><IconBox $w={17}><CursorIcon /></IconBox>Select <Caret /></SmallButton>
            </SmallColumn>
          </GroupBody>
          <GroupLabel>Find</GroupLabel>
        </Group>
      </Ribbon>

      <Workspace>
        <NavPane>
          <NavHeader>
            <NavHeaderTitle>All Tables</NavHeaderTitle>
            <RoundCaret><Caret color="#3c5a86" /></RoundCaret>
            <NavDivider />
            <Svg w={8} h={8}>
              <path d="M4 .5L1 4l3 3.500M7.500.5L4.500 4l3 3.500" fill="none" stroke="#3c5a86" />
            </Svg>
          </NavHeader>
          <NavGroupHeader>
            DETAIL
            <Svg w={8} h={9}>
              <path d="M.5 4L4 1l3.500 3M.5 8L4 5l3.500 3" fill="none" stroke="#3c5a86" />
            </Svg>
          </NavGroupHeader>
          <NavRow><TableIcon />DETAIL : Table</NavRow>
          <NavRow><QueryIcon />ACCESS DATABASE USING QU...</NavRow>
          <NavRow $selected><FormIcon pink />Form2</NavRow>
        </NavPane>
        <Splitter />

        <Document>
          <DocTabs>
            <DocTab $active $w={69}><FormIcon />Form2</DocTab>
            <DocTab $w={76}><TableIcon />DETAIL</DocTab>
            <DocClose>
              <Svg w={9}>
                <path d="M1 1l7 7M8 1L1 8" stroke="#101f3a" strokeWidth="1.8" />
              </Svg>
            </DocClose>
          </DocTabs>
          <FormHeader>
            <HeaderBand>Y2H VOLUNTEER MANAGEMENT SYSTEM</HeaderBand>
            <LogoFrame><Logo /></LogoFrame>
          </FormHeader>
          <FormArea>
            <RecordSelector>
              <PencilBox><PencilIcon /></PencilBox>
            </RecordSelector>
            <FormDetail>
              <FieldColumns>
                <FieldColumn>{renderFields(leftFields, 101, 261)}</FieldColumn>
                <FieldColumn>{renderFields(rightFields, 165, 289)}</FieldColumn>
              </FieldColumns>
              <ButtonRow>
                <FormButton $w={138} $pr={1}>Previous</FormButton>
                <FormButton $w={138} $ml={66} $pr={7}>Next</FormButton>
                <FormButton $w={154} $ml={46}>Add</FormButton>
              </ButtonRow>
            </FormDetail>
          </FormArea>
          <RecordBar>
            Record:
            <BarNav $ml={6}><NavIcon kind="first" /></BarNav>
            <BarNav $ml={7}><NavIcon kind="prev" /></BarNav>
            <RecordField $w={50} $ml={2}>1 of 1</RecordField>
            <BarNav $ml={6}><NavIcon kind="next" /></BarNav>
            <BarNav $ml={7}><NavIcon kind="last" /></BarNav>
            <BarNav $ml={7}><NavIcon kind="new" /></BarNav>
            <BarDivider $ml={7} />
            <BarNav $ml={9}><FilterOffIcon /></BarNav>
            <BarText $ml={2}>Unfiltered</BarText>
            <BarDivider $ml={8} />
            <RecordField $w={70} $ml={5}>Search</RecordField>
          </RecordBar>
        </Document>
      </Workspace>

      <StatusBar>
        Form View
        <StatusDivider $ml={656} />
        <BarText $ml={599}>Num Lock</BarText>
        <StatusDivider $ml={9} />
        <ViewButtons>
          <ViewButton $active><FormIcon /></ViewButton>
          <ViewButton><LayoutViewIcon /></ViewButton>
          <ViewButton><DesignViewIcon /></ViewButton>
        </ViewButtons>
      </StatusBar>
    </Window>
  );
};

export default App;
